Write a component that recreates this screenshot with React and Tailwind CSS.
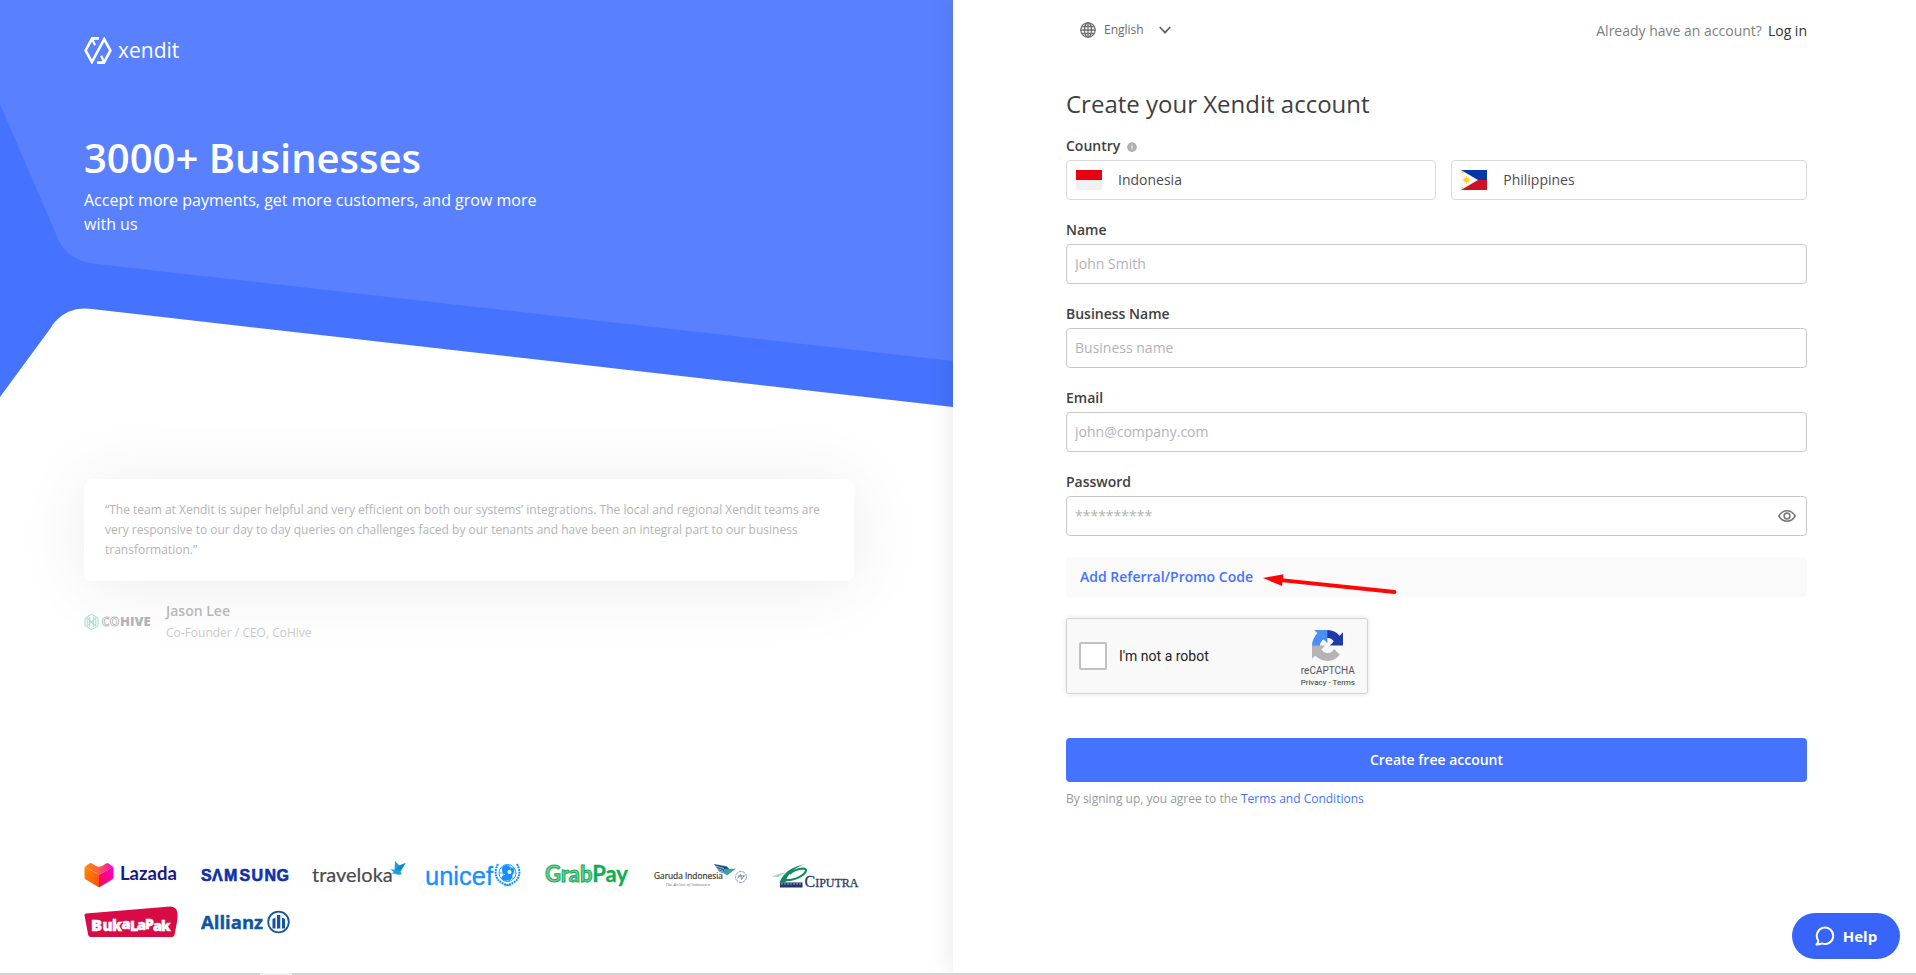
import React from "react";
import { IoIosInformationCircle } from "react-icons/io";

const fields = [
  { id: "name", label: "Name", type: "text", placeholder: "John Smith" },
  { id: "business", label: "Business Name", type: "text", placeholder: "Business name" },
  { id: "email", label: "Email", type: "email", placeholder: "john@company.com" },
];

function XenditMark() {
  return (
    <svg className="h-[27px] w-7" viewBox="0 0 28 27" fill="none" stroke="#fff" strokeWidth="2.6">
      <path d="M15 1.4H8.2L1.6 13.4 7.9 25 20.2 2.2 26.4 13.4 20 25.6H13" strokeLinejoin="miter" />
      <path d="M8.2 2l2.8 6.2M20 25l-2.8-6.2" strokeWidth="2.2" />
    </svg>
  );
}

function CoHiveMark() {
  return (
    <svg className="h-6 w-[68px] overflow-visible" viewBox="0 -4 68 24" aria-label="CoHive">
      <g fill="none" stroke="#8fe0cf" strokeWidth="0.9">
        <path d="M7.5.3l6.5 3.8v7.8l-6.5 3.8L1 11.9V4.1z" />
        <path d="M3.2 4v8l8.6-8v8zM5.4 2.5v10.8M9.6 2.5v10.8M3.2 4l8.6 8" />
      </g>
      <text x="17.5" y="12" fontFamily="Open Sans, sans-serif" fontWeight="700" fontSize="12.5" fill="#fff" stroke="#b4b4b4" strokeWidth="0.8">CO</text>
      <text x="36" y="12" fontFamily="Open Sans, sans-serif" fontWeight="800" fontSize="13" fill="#b4b4b4">HIVE</text>
    </svg>
  );
}

function Lazada() {
  return (
    <svg className="h-[30px] w-[94px]" viewBox="0 0 94 30">
      <defs>
        <linearGradient id="lz1" x1="0" y1="0" x2="1" y2="1"><stop offset="0" stopColor="#ff8a00" /><stop offset="1" stopColor="#ff4a12" /></linearGradient>
        <linearGradient id="lz2" x1="0" y1="1" x2="1" y2="0"><stop offset="0" stopColor="#ff0a3c" /><stop offset="1" stopColor="#f800d8" /></linearGradient>
        <linearGradient id="lz3" x1="0" y1="0" x2="1" y2="0"><stop offset="0" stopColor="#ff8a00" /><stop offset="0.5" stopColor="#ff5a50" /><stop offset="1" stopColor="#ff00c8" /></linearGradient>
      </defs>
      <path d="M.5 6L15 13.5V26q-.8 0-1.5-.5L1.8 18.5Q.5 17.7.5 16.5z" fill="url(#lz1)" />
      <path d="M29.5 6L15 13.5V26q.8 0 1.5-.5l11.7-7q1.3-.8 1.3-2z" fill="url(#lz2)" />
      <path d="M.5 6L5.5 2.5q1.3-.8 2.5 0l4 2.4q3 1.6 6 0l4-2.4q1.2-.8 2.5 0l5 3.5L15 13.5z" fill="url(#lz3)" />
      <text x="36" y="18.5" fontFamily="Lato, sans-serif" fontWeight="700" fontSize="18.5" fill="#1a1a80">Lazada</text>
    </svg>
  );
}

function Samsung() {
  return (
    <svg className="h-[30px] w-[88px]" viewBox="0 0 88 30" stroke="#0c32a8" strokeWidth="0.6">
      <g fontFamily="Liberation Sans Narrow, Liberation Sans, sans-serif" fontWeight="700" fontSize="16" fill="#0c32a8">
        <text x="0" y="20">S</text>
        <text x="11" y="20">Λ</text>
        <text x="23" y="20">M</text>
        <text x="38.5" y="20">S</text>
        <text x="50.5" y="20">U</text>
        <text x="63.5" y="20">N</text>
        <text x="75.5" y="20">G</text>
      </g>
    </svg>
  );
}

function Traveloka() {
  return (
    <svg className="h-[30px] w-[91px] overflow-visible" viewBox="0 0 91 30">
      <text x="0" y="20.5" fontFamily="Lato, sans-serif" fontSize="20" fill="#4a4a4c" stroke="#4a4a4c" strokeWidth="0.2">traveloka</text>
      <path d="M78.5 8.5q2.5-.5 4 .5l.5-9 4.5 4.5 6-2.5q-3.5 7-5 8.5.5 1.5 1.5 2.8-4 1.2-7-.5L79 12.5l3-1.5z" fill="#1ba0e2" />
      <path d="M83 9l4.5-4.5 6-2.5-5 6.5z" fill="#0c86c6" />
    </svg>
  );
}

function Unicef() {
  return (
    <svg className="h-[30px] w-[95px] overflow-visible" viewBox="0 0 95 30">
      <text x="-1" y="23.5" fontFamily="Liberation Sans, sans-serif" fontSize="25.5" fill="#1690ff" stroke="#1690ff" strokeWidth="0.3">unicef</text>
      <g fill="none" stroke="#1690ff">
        <circle cx="81.5" cy="12" r="8.5" strokeWidth="0.9" />
        <ellipse cx="81.5" cy="12" rx="4.5" ry="8.5" strokeWidth="0.7" />
        <path d="M73 12h17M75 7h13M75 17h13" strokeWidth="0.7" />
        <path d="M72 3q-4.5 8-.5 15 4 5.5 13 6.5M91 3q4.5 8 .5 15-4 5.5-13 6.5" strokeWidth="2" strokeDasharray="2 .7" />
      </g>
      <path d="M76 8.5q0-4 4-4.5 4 0 4.2 3.5l4-.5q.8 4-1.7 6.5.5 4-3.5 6h-6q-2-2-1-4l3-2q-3-1.5-3-5z" fill="#1690ff" />
      <circle cx="83.5" cy="11" r="2" fill="#fff" />
    </svg>
  );
}

function GrabPay() {
  return (
    <svg className="h-[30px] w-[84px] overflow-visible" viewBox="-1 0 84 30">
      <text x="0" y="20.5" fontFamily="Lato, sans-serif" fontWeight="700" fontSize="22" fill="#10ad54">
        <tspan fill="#6fcf9a" stroke="#10ad54" strokeWidth="1">Grab</tspan>
        <tspan stroke="#10ad54" strokeWidth="0.3">Pay</tspan>
      </text>
    </svg>
  );
}

function Garuda() {
  return (
    <svg className="h-[30px] w-[95px] overflow-visible" viewBox="-3 0 95 30">
      <text x="0" y="18" fontFamily="Open Sans, sans-serif" fontSize="8.3" fill="#3c3434" stroke="#3c3434" strokeWidth="0.2">Garuda Indonesia</text>
      <text x="11.5" y="24.5" fontFamily="Open Sans, sans-serif" fontStyle="italic" fontSize="4.3" fill="#777">The Airline of Indonesia</text>
      <path d="M60 3l13 2.5 3 3.5-3.5 4.5-3-1.5-4-1z" fill="#1f4e86" />
      <path d="M69.5 8l12.5-.2q-3 1.7-5 3.7l-4 3-3-2.5z" fill="#35a4a0" />
      <path d="M61 5l9 2.500M63 7.500l6 2M65 10l5 1.300" stroke="#fff" strokeWidth="0.6" />
      <g fill="none" stroke="#6d8fc0">
        <circle cx="87" cy="16" r="5.5" strokeWidth="0.9" strokeDasharray="3 .8" />
        <path d="M83.5 17.5l3-4 1 5 3-4.500M84 15h6.500" strokeWidth="1" />
      </g>
    </svg>
  );
}

function Ciputra() {
  return (
    <svg className="h-[30px] w-[92px] overflow-visible" viewBox="-2 0 92 30">
      <path d="M0 16.500Q7 12 15 11.500 10 13.500 7.500 16.500 4 15 0 16.500z" fill="#a8d8c4" />
      <path d="M34 3Q14 7 8.500 21.500h6Q17 9 34 3z" fill="#0f8a5f" />
      <path d="M13 19Q24 20 33 13q4.500-5-1-5.500Q24 8 18.500 13" fill="none" stroke="#0f8a5f" strokeWidth="2.2" />
      <path d="M9 21.500h22.500v5H9z" fill="#1f3668" />
      <path d="M10 23h20.500" stroke="#fff" strokeWidth="0.6" strokeDasharray="2 1" />
      <text x="33.5" y="26" fontFamily="Liberation Serif, serif" fontSize="16" fill="#26396c" stroke="#26396c" strokeWidth="0.3">C<tspan fontSize="12">IPUTRA</tspan></text>
    </svg>
  );
}

function Bukalapak() {
  return (
    <svg className="h-8 w-[94px]" viewBox="0 0 94 32">
      <path d="M2 7.500L86 .5q6.500-.2 7.500 6.500.5 4-.5 9l-2.500 13q-.5 2-2.500 2H7q-2.500 0-2.800-2L.5 9q0-1.500 1.500-1.500z" fill="#d90b46" />
      <g fontFamily="Open Sans, sans-serif" fontWeight="800" fill="#fff" stroke="#fff" strokeWidth="0.5">
        <text x="7" y="25" fontSize="16.5">B</text>
        <text x="18.5" y="25" fontSize="15">u</text>
        <text x="28" y="24.5" fontSize="15">k</text>
        <text x="37.5" y="23" fontSize="14.5">a</text>
        <text x="46" y="25" fontSize="14">L</text>
        <text x="53" y="24" fontSize="14.5">a</text>
        <text x="61" y="23" fontSize="14">P</text>
        <text x="69" y="25" fontSize="14.5">a</text>
        <text x="77" y="25" fontSize="14.5">k</text>
      </g>
    </svg>
  );
}

function Allianz() {
  return (
    <svg className="h-8 w-[90px]" viewBox="0 0 90 32">
      <text x="0" y="22.5" fontFamily="Open Sans, sans-serif" fontWeight="700" fontSize="18.5" fill="#10559f" stroke="#10559f" strokeWidth="0.4">Allianz</text>
      <circle cx="77.5" cy="16" r="10.3" fill="none" stroke="#10559f" strokeWidth="1.8" />
      <path d="M76 9h3.3v13.500H76zM71.500 13l3-1.500v11h-3zM81 11.500l3 1.500v9.500h-3z" fill="#10559f" />
    </svg>
  );
}

function IndonesiaFlag() {
  return (
    <svg className="h-5 w-[26px]" viewBox="0 0 26 20">
      <path d="M0 0h26v20H0z" fill="#f1f1f1" />
      <path d="M0 0h26v10H0z" fill="#e70011" />
    </svg>
  );
}

function PhilippinesFlag() {
  return (
    <svg className="h-5 w-[26px]" viewBox="0 0 26 20">
      <path d="M0 0h26v10H0z" fill="#0038a8" />
      <path d="M0 10h26v10H0z" fill="#ce1126" />
      <path d="M0 0l17 10L0 20z" fill="#f7f7f7" />
      <circle cx="5.5" cy="10" r="2.3" fill="#fcd116" />
      <path d="M5.5 6.300v7.400M1.800 10h7.400M3 7.400l5 5.200M8 7.400l-5 5.200" stroke="#fcd116" strokeWidth="0.9" />
      <path d="M.5 1.500h1.800v1.600H.5zM.5 17h1.800v1.600H.5z" fill="#fcd116" />
    </svg>
  );
}

function RecaptchaMark() {
  return (
    <svg className="size-[31px]" viewBox="0 0 64 64">
      <path d="M64 31.955l-.033-1.370V4.687l-7.160 7.160C50.948 4.674 42.033.093 32.050.093c-10.400 0-19.622 4.960-25.458 12.640l11.736 11.860a15.550 15.550 0 0 1 4.754-5.334c2.050-1.600 4.952-2.906 8.968-2.906.485 0 .86.057 1.135.163 4.976.393 9.288 3.140 11.828 7.124l-8.307 8.307 27.295-.013" fill="#1c3aa9" />
      <path d="M31.862.094l-1.370.033H4.594l7.160 7.160C4.580 13.147 0 22.060 0 32.046c0 10.400 4.960 19.622 12.640 25.458L24.500 45.768a15.550 15.550 0 0 1-5.334-4.754c-1.600-2.050-2.906-4.952-2.906-8.968 0-.485.057-.86.163-1.135.393-4.976 3.140-9.288 7.124-11.828l8.307 8.307-.013-27.295" fill="#4a90f2" />
      <path d="M.001 32.045l.033 1.370v25.898l7.160-7.160c5.860 7.173 14.774 11.754 24.760 11.754 10.400 0 19.622-4.960 25.458-12.640l-11.736-11.860a15.550 15.550 0 0 1-4.754 5.334c-2.050 1.600-4.952 2.906-8.968 2.906-.485 0-.86-.057-1.135-.163-4.976-.393-9.288-3.140-11.828-7.124l8.307-8.307-27.295.013" fill="#b4b4b4" />
    </svg>
  );
}

function HeroPanel() {
  return (
    <section className="relative flex min-h-[973px] w-[953px] max-w-1/2 shrink-0 flex-col bg-white pr-20 pl-[84px]">
      <svg className="absolute inset-x-0 top-0 h-[408px] w-full" viewBox="0 0 953 408" preserveAspectRatio="none">
        <path d="M0 0H953V407L92 309Q69 306 55 322Q52 325 50 329L0 397z" fill="#4573ff" />
        <path d="M0 0H953V361L92 263.500Q68 259 59 241L0 104z" fill="#5981ff" />
      </svg>
      <div className="relative flex h-[264px] flex-col pt-9 text-white">
        <a href="#home" className="flex items-center gap-1.5 self-start">
          <XenditMark />
          <span className="text-[21px] leading-7">xendit</span>
        </a>
        <h1 className="mt-16 text-[40px] leading-[60px] font-semibold">3000+ Businesses</h1>
        <p className="max-w-[480px] text-base">Accept more payments, get more customers, and grow more with us</p>
      </div>
      <figure className="relative mt-[215px] mr-[19px]">
        <blockquote className="rounded-lg bg-white px-[21px] py-[21px] text-xs leading-5 text-[#b4b4b4] shadow-[0_4px_70px_rgba(0,0,0,0.08)]">
          “The team at Xendit is super helpful and very efficient on both our systems’ integrations. The local and regional Xendit teams are very responsive to our day to day queries on challenges faced by our tenants and have been an integral part to our business transformation.”
        </blockquote>
        <figcaption className="mt-[19px] flex items-center gap-3.5">
          <CoHiveMark />
          <span className="flex flex-col">
            <span className="text-sm leading-[22px] font-semibold text-[#b8b8b8]">Jason Lee</span>
            <span className="text-xs leading-[22px] text-[#cacaca]">Co-Founder / CEO, CoHive</span>
          </span>
        </figcaption>
      </figure>
      <div className="relative mt-auto mb-[35px] flex flex-wrap items-center gap-x-[23px] gap-y-[15px]">
        <Lazada /><Samsung /><Traveloka /><Unicef /><GrabPay /><Garuda /><Ciputra /><Bukalapak /><Allianz />
      </div>
    </section>
  );
}

function SignupForm() {
  return (
    <form className="flex flex-col text-sm text-[#4c4c4c]" onSubmit={(e) => e.preventDefault()}>
      <h2 className="text-2xl leading-9 text-[#404040]">Create your Xendit account</h2>
      <fieldset className="mt-3.5">
        <legend className="mb-1 flex items-center gap-1.5 leading-5 font-semibold text-[#404040]">
          Country
          <IoIosInformationCircle className="mt-0.5 size-3 text-[#b0b0b0]" />
        </legend>
        <div className="grid grid-cols-[51fr_49fr] gap-[15px]">
          <button type="button" className="flex h-10 items-center gap-4 rounded border border-[#d9d9d9] px-[9px]"><IndonesiaFlag />Indonesia</button>
          <button type="button" className="flex h-10 items-center gap-4 rounded border border-[#d9d9d9] px-[9px]"><PhilippinesFlag />Philippines</button>
        </div>
      </fieldset>
      {fields.map((f) => (
        <div key={f.id} className="mt-5 flex flex-col gap-1">
          <label htmlFor={f.id} className="leading-5 font-semibold text-[#404040]">{f.label}</label>
          <input id={f.id} type={f.type} placeholder={f.placeholder} className="h-10 rounded border border-[#c8c8c8] px-2 pb-0.5 placeholder:text-[#b3b3b3]" />
        </div>
      ))}
      <div className="mt-5 flex flex-col gap-1">
        <label htmlFor="password" className="leading-5 font-semibold text-[#404040]">Password</label>
        <div className="flex h-10 items-center rounded border border-[#c8c8c8] pr-2.5 pl-2">
          <input id="password" type="password" placeholder="**********" className="flex-1 outline-none placeholder:text-[#b3b3b3]" />
          <button type="button" aria-label="Show password">
            <svg className="h-3 w-[18px]" viewBox="0 0 18 12" fill="none" stroke="#767676" strokeWidth="1.5">
              <path d="M.8 6Q4 .8 9 .8T17.200 6Q14 11.200 9 11.200T.8 6z" />
              <circle cx="9" cy="6" r="2.9" />
            </svg>
          </button>
        </div>
      </div>
      <div className="mt-[21px] flex h-10 items-center rounded bg-[#fafafa] pl-3.5">
        <button type="button" className="font-semibold text-[#4573ff]">Add Referral/Promo Code</button>
        <svg className="mt-3.5 ml-2.5 h-5 w-[136px]" viewBox="0 0 136 20">
          <path d="M18 6.200L131.500 18" stroke="#ff0505" strokeWidth="3.8" strokeLinecap="round" />
          <path d="M0 4L20.500.2 19 12z" fill="#ff0505" />
        </svg>
      </div>
      <div className="mt-[21px] flex h-[76px] w-[302px] items-center rounded-[3px] border border-[#d3d3d3] bg-[#f9f9f9] pl-3 font-[Roboto,sans-serif] shadow-[0_0_4px_1px_rgba(0,0,0,0.08)]">
        <input id="robot" type="checkbox" className="size-7 appearance-none rounded-xs border-2 border-[#c1c1c1] bg-white" />
        <label htmlFor="robot" className="ml-3 text-[#222]">I'm not a robot</label>
        <div className="mr-3 ml-auto flex flex-col items-center pt-1.5">
          <RecaptchaMark />
          <span className="mt-1 text-[10px] leading-3 text-[#555]">reCAPTCHA</span>
          <span className="text-[8px] leading-3 text-[#333]"><a href="#privacy">Privacy</a> - <a href="#terms">Terms</a></span>
        </div>
      </div>
      <button type="submit" className="mt-11 h-11 rounded bg-[#4573ff] font-semibold text-white">Create free account</button>
      <p className="mt-2 text-xs leading-[18px] text-[#999]">
        By signing up, you agree to the <a href="#conditions" className="text-[#4573ff]">Terms and Conditions</a>
      </p>
    </form>
  );
}

export default function App() {
  return (
    <div className="flex min-h-screen flex-col bg-white font-['Open_Sans',sans-serif]">
      <div className="flex flex-1">
        <HeroPanel />
        <main className="relative flex flex-1 flex-col bg-white pr-[109px] pl-[113px] shadow-[0_0_24px_rgba(0,0,0,0.1)]">
          <header className="flex h-[86px] items-start justify-between pt-5">
            <button type="button" className="ml-3.5 flex h-5 items-center gap-2 text-xs text-[#6b6b6b]">
              <svg className="size-4" viewBox="0 0 16 16" fill="none" stroke="#6f6f6f" strokeWidth="1.3">
                <circle cx="8" cy="8" r="7.2" />
                <ellipse cx="8" cy="8" rx="3.5" ry="7.2" />
                <path d="M8 .8v14.400M.8 8h14.400M2 4.500h12M2 11.500h12" />
              </svg>
              English
              <svg className="ml-[7px] h-2 w-3" viewBox="0 0 12 8" fill="none" stroke="#666" strokeWidth="1.8"><path d="M.8 1L6 6.600 11.200 1" /></svg>
            </button>
            <p className="flex gap-1.5 text-sm leading-[22px] text-[#808080]">Already have an account? <a href="#login" className="font-medium text-[#333]">Log in</a></p>
          </header>
          <SignupForm />
        </main>
      </div>
      <button type="button" className="fixed right-4 bottom-4 z-20 flex h-[46px] w-[108px] items-center justify-center gap-2 rounded-full bg-[#3864fa] text-[15px] font-bold text-white">
        <svg className="size-5" viewBox="0 0 20 20" fill="none" stroke="#fff" strokeWidth="2" strokeLinejoin="round">
          <path d="M1.500 18.500q2-2 1.800-4A8.200 8.200 0 1 1 7 17.400Q4.500 18.600 1.500 18.500z" />
        </svg>
        Help
      </button>
      <footer className="relative flex h-0.5 bg-[#d3d3d3]"><span className="ml-[260px] w-8 bg-[#f1f1f1]" /></footer>
    </div>
  );
}
